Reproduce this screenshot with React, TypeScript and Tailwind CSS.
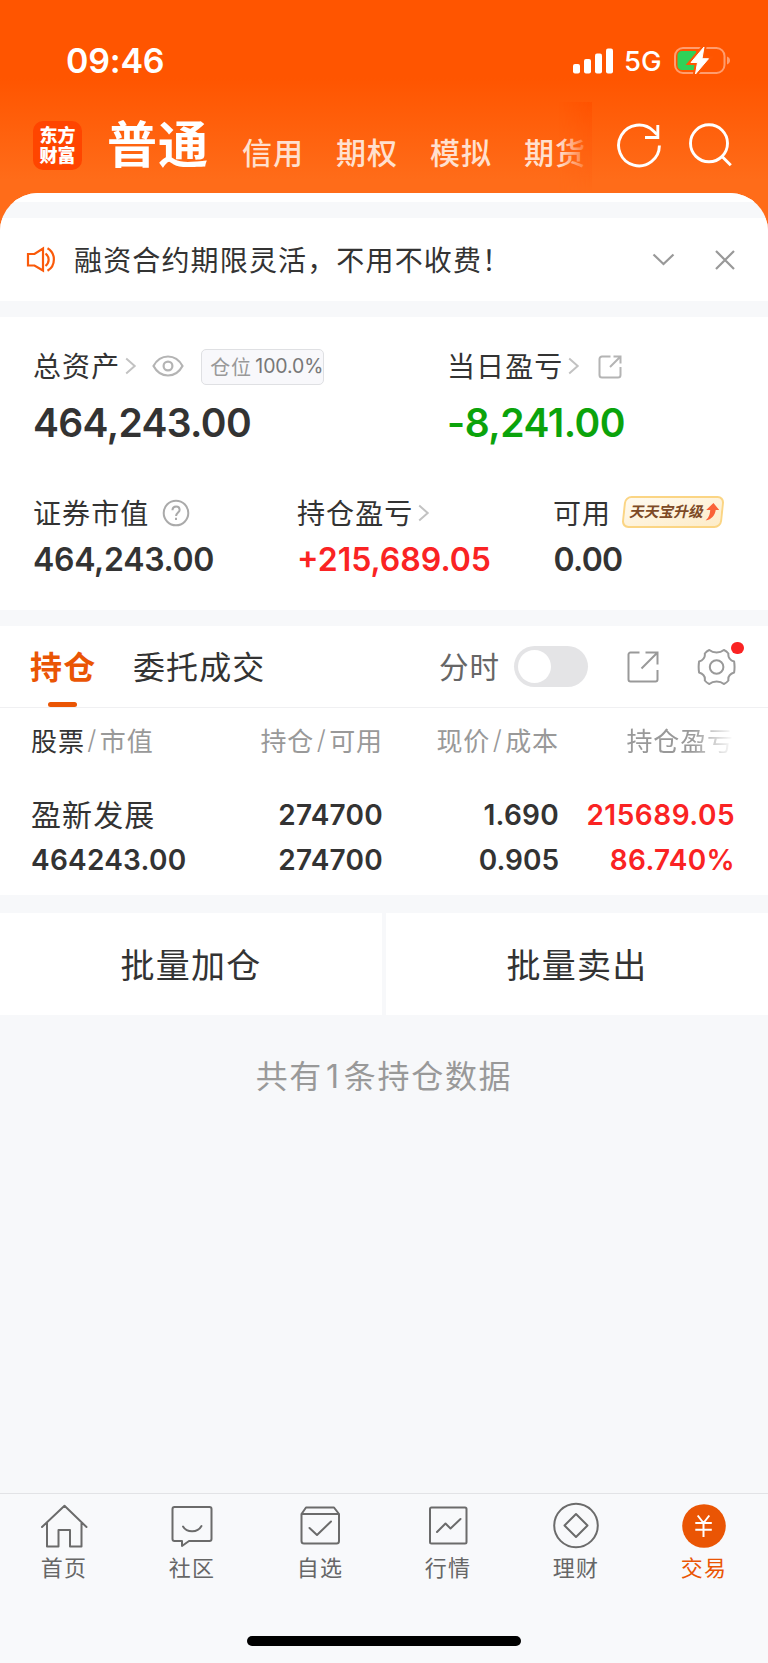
import React from "react";

const CJK = "font-['Noto_Sans_CJK_SC',sans-serif] whitespace-nowrap leading-none";
const NUM = "font-['Inter',sans-serif] whitespace-nowrap leading-none";

function Arrow({ className = "" }: { className?: string }) {
  return (
    <svg className={`h-[18px] w-3 shrink-0 ${className}`} viewBox="0 0 12 18" fill="none" stroke="#c2c2c2" strokeWidth="2">
      <path d="M1.2 1.5 9.700 9 1.2 16.5" />
    </svg>
  );
}

function StatusBar() {
  return (
    <div className="flex h-[102px] items-center pt-5 text-white">
      <span className={`${NUM} ml-[66px] w-[507px] text-[34px] font-semibold tracking-[-0.2px]`}>09:46</span>
      <svg className="h-[26px] w-10 shrink-0" viewBox="0 0 40 26" fill="#fff">
        <rect x="0" y="16" width="7" height="9.5" rx="2" />
        <rect x="11" y="11" width="7" height="14.5" rx="2" />
        <rect x="22" y="5.5" width="7" height="20" rx="2" />
        <rect x="33" y="0.5" width="7" height="25" rx="2" />
      </svg>
      <span className={`${NUM} ml-[11px] mt-[2px] w-[50px] text-[27.5px] font-medium`}>5G</span>
      <svg className="h-[30px] w-[58px] shrink-0" viewBox="0 0 58 30" fill="none">
        <rect x="1" y="2" width="49.5" height="25" rx="8" stroke="#ff9d6e" strokeWidth="2" />
        <path d="M53 10.5c2 .8 3 2.200 3 4s-1 3.200-3 4z" fill="#ff9d6e" />
        <path d="M8 5h14v19H8a4.500 4.500 0 0 1-4.500-4.500v-10A4.500 4.500 0 0 1 8 5Z" fill="#30d158" />
        <path d="M30 1 17 16.500h6.500L21.500 28 34.500 12.700H28Z" fill="#fff" stroke="#ff5703" strokeWidth="5" />
        <path d="M30 1 17 16.500h6.500L21.500 28 34.500 12.700H28Z" fill="#fff" stroke="#fff" strokeWidth="1" strokeLinejoin="round" />
      </svg>
    </div>
  );
}

function Header() {
  return (
    <header className="h-[193px] text-white">
      <StatusBar />
      <div className="relative flex h-[91px]">
        <div className={`${CJK} ml-[33px] mt-[19px] flex h-[49px] w-[49px] flex-col items-center justify-center gap-[2px] rounded-[10px] bg-[#ff4500] pb-[3px] text-[18px] font-black`}>
          <span>东方</span>
          <span>财富</span>
        </div>
        <span className={`${CJK} ml-[25px] mt-[14px] w-[135px] text-[50px] font-bold tracking-[1px]`}>普通</span>
        <div className={`${CJK} mt-[34px] flex gap-8 text-[30px] font-medium tracking-[1px] text-[#ffe0cf]`}>
          <span>信用</span>
          <span>期权</span>
          <span>模拟</span>
          <span>期货</span>
        </div>
        <div className="absolute left-[559px] top-0 h-[90px] w-[33px] bg-linear-to-b from-[#ff5200] to-[#ff6c19] mask-l-from-0% mask-l-to-100%" />
        <svg className="ml-[29px] mt-[19px] h-[48px] w-[48px] shrink-0" viewBox="0 0 48 48" fill="none" stroke="#fff" strokeWidth="2.900">
          <path d="M44.400 24.500a20.400 20.400 0 1 1-6-14.500L42 13.500" />
          <path d="M42.800 4v12.500H30" />
        </svg>
        <svg className="ml-[24px] mt-[20px] h-[48px] w-[48px] shrink-0" viewBox="0 0 48 48" fill="none" stroke="#fff" strokeWidth="2.900">
          <circle cx="22" cy="21.300" r="18.500" />
          <path d="m34.500 34 9.300 9.300" />
        </svg>
      </div>
    </header>
  );
}

function Notice() {
  return (
    <div className="flex h-[83px] items-center bg-white">
      <svg className="ml-[26px] h-[28px] w-[32px] shrink-0" viewBox="0 0 32 28" fill="none" stroke="#fa5a0a" strokeWidth="2.200">
        <path d="M2 8h6.500L17 2.500v22L8.500 19.500H2Z" />
        <path d="M19.500 7.500c4.200 3.500 4.200 9 0 12.500M21.500 2.200c8.500 5 8.500 17.500 0 22.500" />
      </svg>
      <span className={`${CJK} -mt-[2px] ml-4 w-[578px] text-[28px] tracking-[1.150px] text-[#333]`}>融资合约期限灵活，不用不收费！</span>
      <svg className="h-[14px] w-[24px] shrink-0" viewBox="0 0 24 14" fill="none" stroke="#999" strokeWidth="2.200">
        <path d="m1.500 1.500 10 9.500 10-9.500" />
      </svg>
      <svg className="ml-[39px] h-[20px] w-[20px] shrink-0" viewBox="0 0 20 20" fill="none" stroke="#999" strokeWidth="2.200">
        <path d="m1 1 18 18M19 1 1 19" />
      </svg>
    </div>
  );
}

function SummaryLabel({ children }: { children: React.ReactNode }) {
  return <span className={`${CJK} -mt-[3px] text-[28px] tracking-[1.100px] text-[#333]`}>{children}</span>;
}

function Assets() {
  return (
    <section className="h-[293px] bg-white pl-[33px] pt-[29px]">
      <div className="flex">
        <div className="w-[414px]">
          <div className="flex h-10 items-center">
            <SummaryLabel>总资产</SummaryLabel>
            <Arrow className="ml-[5px]" />
            <svg className="ml-[15px] h-[22px] w-8 shrink-0" viewBox="0 0 32 22" fill="none" stroke="#b4b4b4" strokeWidth="2.200">
              <path d="M1.500 11C5 4.500 10.200 1.500 16 1.500S27 4.500 30.500 11C27 17.500 21.800 20.500 16 20.500S5 17.500 1.500 11Z" />
              <circle cx="16" cy="11" r="4.400" />
            </svg>
            <div className="ml-[17px] mt-[2px] flex h-9 w-[123px] items-center rounded-[5px] border border-[#dfe0e3] bg-[#f8f8fb] pl-2">
              <span className={`${CJK} -mt-[1px] w-[46px] text-[20px] tracking-[0.800px] text-[#999]`}>仓位</span>
              <span className={`${NUM} text-[19.500px] tracking-[-0.100px] text-[#777]`}>100.0%</span>
            </div>
          </div>
          <div className={`${NUM} mt-[17px] text-[39px] font-semibold tracking-[-0.650px] text-[#333]`}>464,243.00</div>
        </div>
        <div>
          <div className="flex h-10 items-center">
            <SummaryLabel>当日盈亏</SummaryLabel>
            <Arrow className="ml-[5px]" />
            <svg className="ml-[18px] mt-[2px] h-6 w-6 shrink-0" viewBox="0 0 24 24" fill="none" stroke="#b4b4b4" strokeWidth="2">
              <path d="M12.500 1.500H4A2.500 2.500 0 0 0 1.500 4v16A2.500 2.500 0 0 0 4 22.500h16a2.500 2.500 0 0 0 2.500-2.500v-8" />
              <path d="M15.500 1.500h7v7M22.500 1.500 12 12" />
            </svg>
          </div>
          <div className={`${NUM} mt-[17px] text-[39px] font-semibold tracking-[-0.500px] text-[#0ba30b]`}>-8,241.00</div>
        </div>
      </div>
      <div className="mt-[51px] flex">
        <div className="w-[264px]">
          <div className="flex h-10 items-center">
            <SummaryLabel>证券市值</SummaryLabel>
            <svg className="ml-[13px] h-7 w-7 shrink-0" viewBox="0 0 28 28" fill="none" stroke="#aaa" strokeWidth="2">
              <circle cx="14" cy="14" r="12.300" />
              <path d="M10.500 11.200c0-2.200 1.500-3.700 3.600-3.700s3.500 1.400 3.500 3.400c0 2.500-3.500 2.800-3.500 6.100M14 18.800V21" />
            </svg>
          </div>
          <div className={`${NUM} mt-[11px] text-[32px] font-semibold tracking-[-0.300px] text-[#333]`}>464,243.00</div>
        </div>
        <div className="w-[256px]">
          <div className="flex h-10 items-center">
            <SummaryLabel>持仓盈亏</SummaryLabel>
            <Arrow className="ml-[5px]" />
          </div>
          <div className={`${NUM} mt-[11px] text-[32px] font-semibold text-[#fa2323]`}>+215,689.05</div>
        </div>
        <div>
          <div className="flex h-10 items-center">
            <SummaryLabel>可用</SummaryLabel>
            <div className="-mt-[2px] ml-[12px] flex h-[32px] w-[100px] -skew-x-6 items-center rounded-[7px] border-2 border-[#fbd584] bg-linear-to-br from-[#fffaf0] to-[#fdecc8] pl-[5px]">
              <span className={`${CJK} -mt-[1px] -skew-x-6 text-[14.800px] font-bold text-[#7d4a26]`}>天天宝升级</span>
              <svg className="ml-[1px] h-[18px] w-[14px] shrink-0" viewBox="0 0 14 18">
                <path d="M7.500 0 14 7H10.500C10.500 12 7.500 16.500 1.500 17.500 4.500 14.500 5.200 11.500 5 7H1Z" fill="#fa6238" />
              </svg>
            </div>
          </div>
          <div className={`${NUM} mt-[11px] ml-[0.500px] text-[32px] font-semibold tracking-[-0.700px] text-[#333]`}>0.00</div>
        </div>
      </div>
    </section>
  );
}

function Tabs() {
  return (
    <div className="flex h-[82px] items-center border-b border-[#f0f0f2] bg-white">
      <div className="relative ml-[30px] flex h-[81px] w-[103px] items-center">
        <span className={`${CJK} -mt-[4px] text-[32px] font-bold tracking-[1.300px] text-[#ea5504]`}>持仓</span>
        <span className="absolute bottom-0 left-[18px] h-[5.500px] w-[29px] rounded-[3px] bg-[#ea5504]" />
      </div>
      <span className={`${CJK} -mt-[4px] w-[306px] text-[32px] tracking-[1.100px] text-[#333]`}>委托成交</span>
      <span className={`${CJK} -mt-[2px] w-[75px] text-[29.500px] tracking-[1px] text-[#666]`}>分时</span>
      <div className="flex h-[41px] w-[74px] items-center rounded-full bg-[#e4e4e6] pl-1">
        <div className="h-[33px] w-[33px] rounded-full bg-white" />
      </div>
      <svg className="ml-[38px] h-[34px] w-[34px] shrink-0" viewBox="0 0 34 34" fill="none" stroke="#999" strokeWidth="2">
        <path d="M13.500 2.500h-9a2 2 0 0 0-2 2v25a2 2 0 0 0 2 2h25a2 2 0 0 0 2-2V20" />
        <path d="M19.500 2.500h12v12M31.500 2.500 15.500 18.500" />
      </svg>
      <div className="relative ml-[36px] h-10 w-10">
        <svg className="h-10 w-10" viewBox="0 0 40 40" fill="none" stroke="#999" strokeWidth="2" strokeLinejoin="round">
          <path d="M8.800 6.500Q10.800 4 13.300 3Q16.300 5.400 20.600 5.400Q24.900 5.400 27.900 3Q30.400 4 32.400 6.500Q31.600 12.500 38.100 14.500Q39 20 38.100 25.500Q31.600 27.500 32.400 33.500Q30.400 36 27.900 37Q24.900 34.600 20.600 34.600Q16.300 34.600 13.300 37Q10.800 36 8.800 33.500Q9.600 27.500 3.100 25.500Q2.200 20 3.100 14.500Q9.600 12.500 8.800 6.500Z" />
          <circle cx="20.600" cy="20" r="6.800" />
        </svg>
        <span className="absolute -top-[5px] left-[35px] h-[12.500px] w-[12.500px] rounded-full bg-[#fa2323]" />
      </div>
    </div>
  );
}

function Slash() {
  return <span className="px-[2.500px] font-['Inter',sans-serif] font-light">/</span>;
}

function Holdings() {
  return (
    <section className="h-[187px] bg-white">
      <div className={`${CJK} grid grid-cols-[352px_176px_175px] pl-[31px] pt-[19px] text-[26px] tracking-[0.900px] text-[#999]`}>
        <div className="flex justify-between">
          <span className="flex"><span className="text-[#333]">股票</span><Slash />市值</span>
          <span className="flex">持仓<Slash />可用</span>
        </div>
        <span className="flex justify-end">现价<Slash />成本</span>
        <span className="mask-r-from-[calc(100%-42px)] mask-r-to-100% text-right">持仓盈亏</span>
      </div>
      <div className={`${NUM} mt-[39px] grid grid-cols-[352px_176px_176px] pl-[31px] text-[28px] font-semibold tracking-[0.250px] text-[#333]`}>
        <div className="flex h-[45px] items-center justify-between">
          <span className={`${CJK} -mt-[4px] text-[30px] font-normal tracking-[1.100px]`}>盈新发展</span>
          <span>274700</span>
        </div>
        <span className="flex h-[45px] items-center justify-end">1.690</span>
        <span className="flex h-[45px] items-center justify-end tracking-[0.500px] text-[#fa2323]">215689.05</span>
        <div className="flex h-[45px] items-center justify-between">
          <span>464243.00</span>
          <span>274700</span>
        </div>
        <span className="flex h-[45px] items-center justify-end tracking-normal">0.905</span>
        <span className="flex h-[45px] items-center justify-end tracking-[0.300px] text-[#fa2323]">86.740%</span>
      </div>
    </section>
  );
}

const tabs = [
  {
    name: "首页",
    icon: <path d="M2 25 24.500 3.800 46.500 25M7 21v23.500h11.500V28H30v16.500h11.500V21" />,
  },
  {
    name: "社区",
    icon: (
      <>
        <path d="M6.500 5h35a2 2 0 0 1 2 2v30a2 2 0 0 1-2 2H21L14 44v-5H6.500a2 2 0 0 1-2-2V7a2 2 0 0 1 2-2Z" />
        <path d="M15 24.500c4 6.500 14.500 6.500 18.500-.500" />
      </>
    ),
  },
  {
    name: "自选",
    icon: (
      <>
        <path d="M5.500 12 10 5.500h28l5 6.500v27a2.500 2.500 0 0 1-2.500 2.500H8A2.500 2.500 0 0 1 5.500 39ZM5.500 12h37.500" />
        <path d="m13.500 26 7.500 7 14-13.500" />
      </>
    ),
  },
  {
    name: "行情",
    icon: (
      <>
        <rect x="6" y="5.500" width="36.500" height="36" rx="1.500" />
        <path d="m13 30 8.500-8.500 5 5L36.500 17" />
      </>
    ),
  },
  {
    name: "理财",
    icon: (
      <>
        <circle cx="24" cy="23.500" r="21.800" />
        <path d="M24 12 35.500 23.500 24 35 12.500 23.500Z" />
      </>
    ),
  },
  {
    name: "交易",
    icon: (
      <>
        <circle cx="24" cy="24" r="21.800" fill="#ea5504" stroke="none" />
        <path d="M17.700 13.500 23.500 21l5.800-7.500M23.500 21v14M15.300 21h16.500M15.300 27.800h16.500" stroke="#fff" strokeLinecap="butt" />
      </>
    ),
  },
];

function BottomNav() {
  return (
    <footer className="flex h-[170px] flex-col border-t border-[#e2e3e6] bg-[#f8f9fb]">
      <nav className="grid grid-cols-6">
        {tabs.map((t, i) => (
          <div key={t.name} className="flex flex-col items-center pt-2">
            <svg className="h-12 w-12" viewBox="0 0 48 48" fill="none" stroke="#6b6b6b" strokeWidth="2" strokeLinejoin="round" strokeLinecap="round">
              {t.icon}
            </svg>
            <span className={`${CJK} mt-[5px] text-[22px] tracking-[1.200px] ${i === 5 ? "text-[#ea5504]" : "text-[#666]"}`}>{t.name}</span>
          </div>
        ))}
      </nav>
      <div className="mx-auto mt-auto mb-[17px] h-[10px] w-[274px] rounded-full bg-black" />
    </footer>
  );
}

export default function App() {
  return (
    <div className="flex h-[1663px] w-[768px] flex-col overflow-hidden bg-[linear-gradient(180deg,#ff5500_0px,#ff5500_78px,#ff6c19_180px,#ff6c19_240px)]">
      <Header />
      <main className="flex-1 overflow-hidden rounded-t-[38px] bg-[#f7f8fa]">
        <div className="h-[9px] bg-white" />
        <div className="h-4" />
        <Notice />
        <div className="h-4" />
        <Assets />
        <div className="h-4" />
        <Tabs />
        <Holdings />
        <div className="mt-[18px] grid h-[102px] grid-cols-2 gap-1">
          {["批量加仓", "批量卖出"].map((name) => (
            <div key={name} className={`${CJK} flex items-center justify-center bg-white pb-[1px] text-[34px] tracking-[1.300px] text-[#333]`}>
              {name}
            </div>
          ))}
        </div>
        <div className={`${CJK} mt-[43px] text-center text-[32px] tracking-[1.700px] text-[#999]`}>
          共有<span className="px-[3px] font-['Inter',sans-serif]">1</span>条持仓数据
        </div>
      </main>
      <BottomNav />
    </div>
  );
}
